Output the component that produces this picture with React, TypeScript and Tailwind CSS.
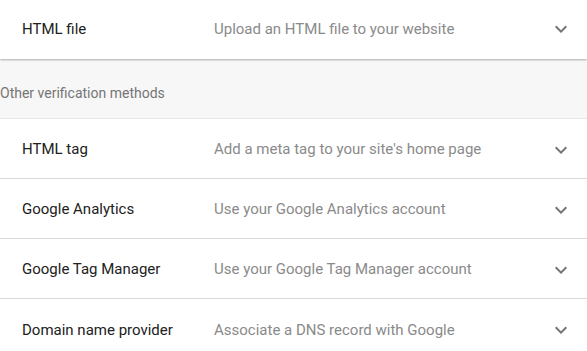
const Chevron = () => (
  <svg width="24" height="24" viewBox="0 0 24 24" className="fill-[#757575]">
    <path d="M16.59 8.59L12 13.17 7.41 8.59 6 10l6 6 6-6z" />
  </svg>
);

const Row = ({ title, desc, last, top }: { title: string; desc: string; last?: boolean; top?: boolean }) => (
  <div className={`flex items-center h-[60px] bg-white ${top ? '' : 'pt-[2px]'} ${last ? '' : 'border-b border-[#dadada]'}`}>
    <div className="w-[214px] pl-[22px] text-[15px] text-[#212121] shrink-0">{title}</div>
    <div className="flex-1 text-[15px] text-[#8a8a8a]">{desc}</div>
    <div className="w-[24px] mr-[14px] flex items-center justify-center">
      <Chevron />
    </div>
  </div>
);

export default function App() {
  return (
    <div className="w-[587px] h-[351px] overflow-hidden bg-[#f7f7f7] font-['Roboto',sans-serif]">
      <div className="relative z-10 h-[60px] shadow-[0_1px_2px_rgba(0,0,0,0.3)] border-b border-[#cfcfcf] bg-white">
        <div className="-mt-[1px]">
          <Row title="HTML file" desc="Upload an HTML file to your website" last top />
        </div>
      </div>
      <div className="h-[60px] pt-[24px] text-[14px] text-[#757575] border-b border-[#e6e6e6]">
        Other verification methods
      </div>
      <Row title="HTML tag" desc="Add a meta tag to your site's home page" />
      <Row title="Google Analytics" desc="Use your Google Analytics account" />
      <Row title="Google Tag Manager" desc="Use your Google Tag Manager account" />
      <Row title="Domain name provider" desc="Associate a DNS record with Google" last />
    </div>
  );
}
